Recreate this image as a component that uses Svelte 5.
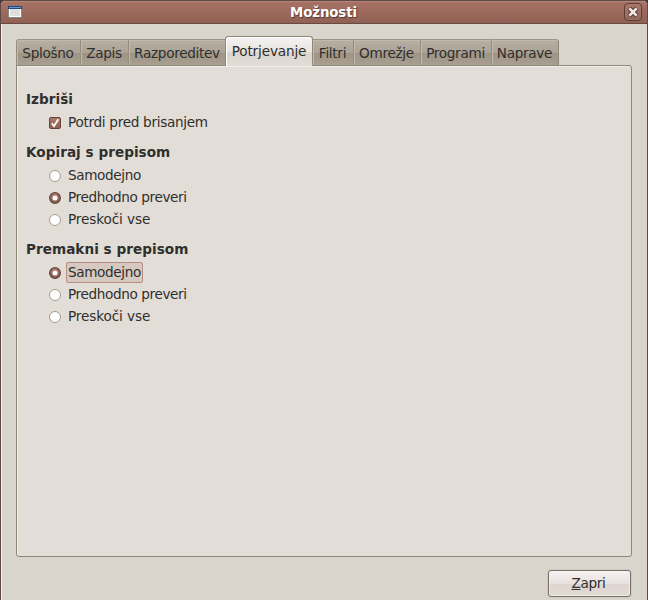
<script>
  const tabs = [
    { label: 'Splošno', width: 64 },
    { label: 'Zapis', width: 48 },
    { label: 'Razporeditev', width: 98 },
    { label: 'Potrjevanje', width: 88, active: true },
    { label: 'Filtri', width: 41 },
    { label: 'Omrežje', width: 67 },
    { label: 'Programi', width: 71 },
    { label: 'Naprave', width: 68 }
  ];
  const modes = [
    { label: 'Samodejno', tracking: -0.37 },
    { label: 'Predhodno preveri', tracking: -0.38 },
    { label: 'Preskoči vse', tracking: -0.11 }
  ];
  const groups = [
    { title: 'Kopiraj s prepisom', selected: 1, focused: -1 },
    { title: 'Premakni s prepisom', selected: 0, focused: 0 }
  ];
</script>

<div class="screen">
  <div class="window">
    <header>
      <svg class="appicon" width="14" height="12" viewBox="0 0 14 12">
        <rect width="14" height="12" fill="#85857f" />
        <rect x="1" y="1" width="12" height="10" fill="#fff" />
        <rect x="2" y="3" width="10" height="7" fill="#dcdfda" />
        <rect width="14" height="3" fill="#204a87" />
        <rect x="1" y="1" width="12" height="1" fill="#6699d0" />
      </svg>
      <h1>Možnosti</h1>
      <button class="close" aria-label="Zapri okno">
        <svg width="16" height="16" viewBox="0 0 16 16">
          <path d="M4.2 4.2L11.8 11.8M11.8 4.2L4.2 11.8" stroke="#573a34" stroke-width="4.6" />
          <path d="M4.4 4.4L11.6 11.6M11.6 4.4L4.4 11.6" stroke="#f1e9e5" stroke-width="2.7" />
        </svg>
      </button>
    </header>
    <main>
      <nav>
        {#each tabs as tab}
          <button class="tab" class:active={tab.active} style="width: {tab.width}px">{tab.label}</button>
        {/each}
      </nav>
      <div class="panel">
        <section>
          <h2>Izbriši</h2>
          <div class="option">
            <svg width="12" height="12" viewBox="0 0 12 12">
              <rect x=".5" y=".5" width="11" height="11" rx="1.5" fill="url(#fill)" stroke="#65443d" />
              <path d="M2.8 6.2L5 9.2L9.3 2.2" fill="none" stroke="#fff" stroke-width="1.8" />
            </svg>
            <span class="label">Potrdi pred brisanjem</span>
          </div>
        </section>
        {#each groups as group}
          <section>
            <h2>{group.title}</h2>
            {#each modes as mode, i}
              <div class="option">
                <svg width="12" height="12" viewBox="0 0 12 12">
                  {#if group.selected === i}
                    <circle cx="6" cy="6" r="5.3" fill="url(#fill)" stroke="#65443d" stroke-width="1.3" />
                    <circle cx="6" cy="6" r="2.5" fill="#fff" />
                  {:else}
                    <circle cx="6" cy="6" r="5.5" fill="#fff" stroke="#a39d8f" />
                  {/if}
                </svg>
                <span class="label" class:focused={group.focused === i} style="letter-spacing: {mode.tracking}px">{mode.label}</span>
              </div>
            {/each}
          </section>
        {/each}
      </div>
      <footer><button class="action"><u>Z</u>apri</button></footer>
    </main>
  </div>
  <svg class="defs" width="0" height="0">
    <defs>
      <linearGradient id="fill" x1="0" y1="0" x2="0" y2="1">
        <stop offset="0" stop-color="#ae7b6c" />
        <stop offset="1" stop-color="#8c6054" />
      </linearGradient>
    </defs>
  </svg>
</div>

<style>
  :global(body) { margin: 0; overflow: hidden; }
  * { box-sizing: border-box; }
  .screen {
    width: 648px; height: 600px; background: #3b3735; overflow: hidden;
    font: 13.6px/16px "DejaVu Sans", sans-serif; letter-spacing: -.3px; color: #2f2f2d;
  }
  button { font: inherit; letter-spacing: inherit; color: inherit; margin: 0; padding: 0; }
  svg { display: block; flex: none; overflow: visible; }
  .defs { height: 0; }
  .window {
    height: 600px; border: solid #5d4a44; border-width: 1px 1px 0;
    border-radius: 5px 5px 0 0; background: #d9d5cd; overflow: hidden;
  }
  header {
    height: 23px; display: flex; align-items: center; padding: 0 5px 1px 7px;
    background: linear-gradient(#a77265, #8f6154);
    border-top: 1px solid #b68477; border-bottom: 1px solid #69483f;
  }
  h1 {
    flex: 1; margin: 0; padding: 2px 0 0 1px; text-align: center; font-size: 13.333px; line-height: 18px;
    letter-spacing: -.1px; color: #fff; text-shadow: 1px 1px 1px #573a34;
  }
  .close {
    width: 18px; height: 18px; border: 1px solid #593d35; border-radius: 4px;
    background: linear-gradient(#aa7669, #92655a); display: flex;
    box-shadow: inset 0 0 0 1px #b1857a55;
  }
  main { height: 576px; padding: 12px 15px 0 14px; border-left: 1px solid #f3f1ec; }
  nav { display: flex; align-items: flex-end; height: 30px; position: relative; z-index: 1; }
  .tab {
    flex: none; height: 27px; white-space: nowrap; border: solid #8f8778; border-width: 1px 0 1px 1px;
    border-color: #9c9485 #8f8778 #8f8778 #958c7e;
    background: linear-gradient(#b7afa2 0 0, #aba395 50%, #9d9485 51%, #a89f91);
    box-shadow: inset 1px 1px #c2baad; padding: 0 1px 0 0;
  }
  .tab:first-child { border-top-left-radius: 3px; }
  .tab:last-child { border-right-width: 1px; border-top-right-radius: 3px; }
  .tab.active {
    height: 30px; margin: 0 -1px; border: 1px solid #8f8778; border-bottom: 0; border-radius: 3px 3px 0 0;
    background: linear-gradient(#f5f4f2, #e8e4e0 50%, #dbd5ce 51%, #e2ddd7); position: relative;
    box-shadow: inset 1px 1px #fff; padding: 0 0 2px; letter-spacing: -.14px;
  }
  .panel {
    width: 616px; height: 492px; margin-top: -1px; padding: 25px 9px;
    background: #e2ddd7; border: 1px solid #8f8778; border-radius: 0 3px 3px;
    box-shadow: inset 1px 1px #f1eee9;
  }
  section { margin-bottom: 11px; }
  h2 { margin: 0 0 3px; font-size: 13.6px; line-height: 17px; letter-spacing: .03px; }
  .option { display: flex; align-items: center; height: 22px; padding-left: 23px; }
  .option svg { margin-top: 2px; }
  .label { margin-left: 5px; height: 21px; line-height: 19px; padding: 0 1px; border: 1px solid transparent; border-radius: 2px; white-space: nowrap; }
  .focused { background: #d5c9c1; border-color: #b78d80; }
  footer { display: flex; justify-content: flex-end; padding: 13px 1px 0 0; }
  .action {
    width: 83px; height: 27px; border: 1px solid #77706a; border-radius: 3px; padding: 0 2px 2px 0;
    background: linear-gradient(#f6f3f2, #e8e0de 50%, #dfd4d0 52%, #e2d9d5);
    box-shadow: inset 0 0 0 1px #f7f3f1aa, 0 0 0 1px #cec9c1;
  }
</style>
